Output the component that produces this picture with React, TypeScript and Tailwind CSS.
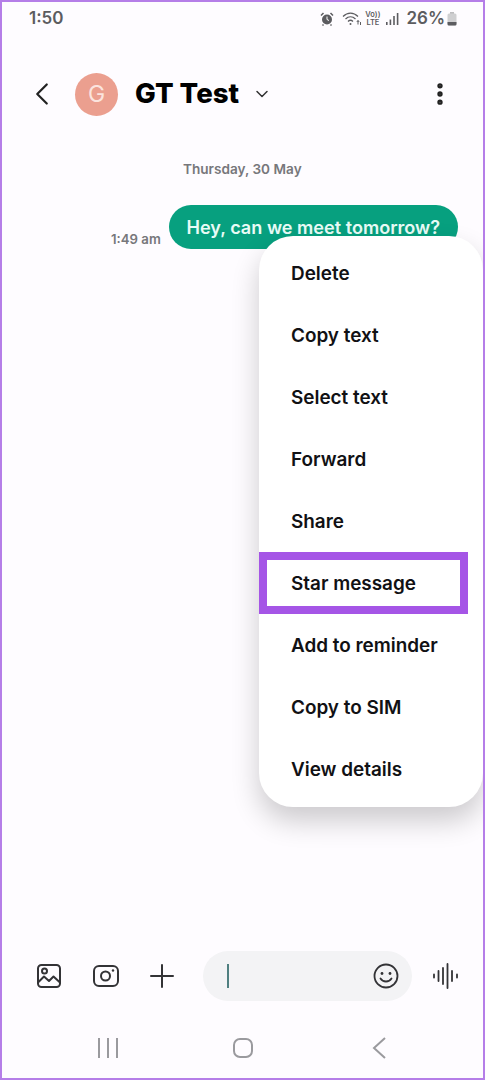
import { ChevronDown, ChevronLeft, MoreVertical } from "lucide-react";

const MENU_ITEMS = [
  "Delete",
  "Copy text",
  "Select text",
  "Forward",
  "Share",
  "Star message",
  "Add to reminder",
  "Copy to SIM",
  "View details",
];

function StatusIcons() {
  return (
    <div className="flex items-center text-[#5c5c60]">
      {/* alarm */}
      <svg width="14" height="14" viewBox="0 0 14 14" className="mr-[7px]">
        <circle cx="7" cy="7.5" r="5" fill="currentColor" />
        <path d="M1 3.5 3.5 1M13 3.5 10.5 1M3.5 12.5 2.5 13.5M10.5 12.5l1 1" stroke="currentColor" strokeWidth="1.5" />
        <path d="M7 4.5v3l2 1" stroke="#fff" strokeWidth="1" fill="none" />
      </svg>
      {/* wifi */}
      <svg width="22" height="16" viewBox="0 0 20 16" fill="none" stroke="currentColor" strokeWidth="1.2" className="mr-[2px]">
        <path d="M1 5.5C5.5 1 11.5 1 16 5.5" />
        <path d="M3.5 8C6.5 5 10.5 5 13.5 8" />
        <path d="M6 10.5C7.5 9 9.5 9 11 10.5" />
        <circle cx="8.5" cy="13" r="1" fill="currentColor" stroke="none" />
        <path d="M16 9.5v4M14.8 11l1.2-1.5 1.2 1.5M18.5 11v3" strokeWidth="1" />
      </svg>
      <div className="mr-[6px] flex flex-col items-center text-[7.5px] leading-[8px] font-semibold">
        <span>Vo))</span>
        <span>LTE</span>
      </div>
      {/* signal */}
      <svg width="13" height="14" viewBox="0 0 13 14" fill="currentColor" className="mr-[7px]">
        <rect x="0" y="10" width="1.6" height="3" />
        <rect x="3.6" y="7.5" width="1.6" height="5.5" />
        <rect x="7.2" y="4" width="1.6" height="9" />
        <rect x="10.8" y="1" width="1.6" height="12" />
      </svg>
      <span className="text-[17px] leading-none font-semibold">26%</span>
      {/* battery */}
      <svg width="10" height="16" viewBox="0 0 10 16" className="ml-[2px]">
        <rect x="3" y="1" width="4" height="2" fill="#bdbdbf" />
        <rect x="0.5" y="2.5" width="9" height="12" rx="1.5" fill="#cfcfd1" />
        <path d="M.5 11h9v2a1.5 1.5 0 0 1-1.5 1.5H2A1.5 1.5 0 0 1 .5 13z" fill="#5c5c60" />
      </svg>
    </div>
  );
}

function ContextMenu() {
  return (
    <div className="absolute top-[117px] right-0 z-10 w-[224px] rounded-[34px] bg-white pt-[7px] pb-[6px] shadow-[0_14px_28px_rgba(0,0,0,0.2)]">
      {MENU_ITEMS.map((item) => (
        <div key={item} className="relative flex h-[62px] items-center pl-[32px] text-[18.9px] font-semibold text-[#111114]">
          {item}
          {item === "Star message" && (
            <div className="absolute inset-y-0 left-0 -translate-y-px w-[209px] border-[8px] border-[#a555e6]" />
          )}
        </div>
      ))}
    </div>
  );
}

function Composer() {
  return (
    <div className="flex h-[50px] items-center text-[#333336]">
      <svg width="26" height="26" viewBox="0 0 26 26" fill="none" stroke="currentColor" strokeWidth="2" className="ml-[34px]">
        <rect x="2" y="2" width="22" height="22" rx="3.5" />
        <circle cx="8.5" cy="8" r="2.5" />
        <path d="M2 19.5 8 13.5l5 4.5 4.5-4.5 6.5 6" strokeLinejoin="round" />
      </svg>
      <svg width="28" height="24" viewBox="0 0 28 24" fill="none" stroke="currentColor" strokeWidth="2" className="ml-[30px]">
        <rect x="2" y="2" width="24" height="20" rx="5" />
        <circle cx="13.5" cy="12" r="4.5" />
        <circle cx="21" cy="6.5" r="1.2" fill="currentColor" stroke="none" />
      </svg>
      <svg width="24" height="24" viewBox="0 0 24 24" fill="none" stroke="currentColor" strokeWidth="2" strokeLinecap="round" className="ml-[30px]">
        <path d="M12 1v22M1 12h22" />
      </svg>
      <div className="ml-[29px] flex h-[50px] w-[209px] items-center rounded-full bg-[#f3f3f5] pr-[13px] pl-[24px]">
        <div className="h-[24px] w-[1.5px] bg-[#4f7f80]" />
        <svg width="26" height="26" viewBox="0 0 26 26" fill="none" stroke="currentColor" strokeWidth="1.8" strokeLinecap="round" className="ml-auto">
          <circle cx="13" cy="13" r="11.5" />
          <circle cx="9" cy="10.5" r="1.4" fill="currentColor" stroke="none" />
          <circle cx="17" cy="10.5" r="1.4" fill="currentColor" stroke="none" />
          <path d="M7.5 15.5c2.5 4 8.5 4 11 0" />
        </svg>
      </div>
      <svg width="26" height="26" viewBox="0 0 26 26" fill="none" stroke="currentColor" strokeWidth="1.8" strokeLinecap="round" className="ml-[21px]">
        <path d="M1 11.5v3M5.5 8v10M10 5v16M14.5 1v24M19 8v10M24 11.5v3" />
      </svg>
    </div>
  );
}

export default function App() {
  return (
    <div className="flex h-[1080px] w-[485px] flex-col overflow-hidden border-2 border-[#b57ee8] bg-[#fefcff] font-['Inter',sans-serif]">
      <div className="flex h-[31px] shrink-0 items-center justify-between pt-[2px] pr-[26px] pl-[27px]">
        <span className="text-[17px] font-semibold text-[#5c5c60]">1:50</span>
        <StatusIcons />
      </div>

      <div className="flex h-[86px] shrink-0 items-center pt-[36px]">
        <ChevronLeft className="ml-[21px] h-[38px] w-[38px] text-[#222]" strokeWidth={1.4} />
        <div className="ml-[14px] flex h-[43px] w-[43px] items-center justify-center rounded-full bg-[#eb9f8f] text-[23px] text-[#fbe4de]">
          G
        </div>
        <span className="ml-[17px] text-[27.6px] font-extrabold text-black">GT Test</span>
        <ChevronDown className="ml-[13px] h-[20px] w-[20px] text-[#333]" strokeWidth={1.8} />
        <MoreVertical className="mr-[29px] ml-auto h-[28px] w-[28px] text-[#222]" strokeWidth={2.6} />
      </div>

      <main className="relative flex min-h-0 flex-1 flex-col">
        <div className="mt-[40px] pl-[181px] text-[13.6px] font-semibold text-[#77777b]">Thursday, 30 May</div>
        <div className="mt-[26px] flex items-end pl-[109px]">
          <span className="mr-[8px] text-[13.2px] font-semibold text-[#77777b]">1:49 am</span>
          <div className="flex h-[44px] w-[289px] items-center justify-center rounded-[22px] bg-[#07a07f] text-[18.1px] font-semibold text-[#e8fbf6]">
            Hey, can we meet tomorrow?
          </div>
        </div>
        <ContextMenu />
        <div className="mt-auto">
          <Composer />
          <div className="flex h-[77px] items-start pt-[36px] text-[#9a9a9e]">
            <svg width="22" height="22" viewBox="0 0 22 22" fill="none" stroke="currentColor" strokeWidth="2" className="ml-[95px]">
              <path d="M2 1v20M11 1v20M20 1v20" />
            </svg>
            <svg width="22" height="22" viewBox="0 0 22 22" fill="none" stroke="currentColor" strokeWidth="2" className="ml-[113px]">
              <rect x="2" y="2" width="18" height="18" rx="6" />
            </svg>
            <svg width="15" height="22" viewBox="0 0 15 22" fill="none" stroke="currentColor" strokeWidth="2" className="ml-[118px]">
              <path d="M13 1 2 11l11 10" />
            </svg>
          </div>
        </div>
      </main>
    </div>
  );
}
